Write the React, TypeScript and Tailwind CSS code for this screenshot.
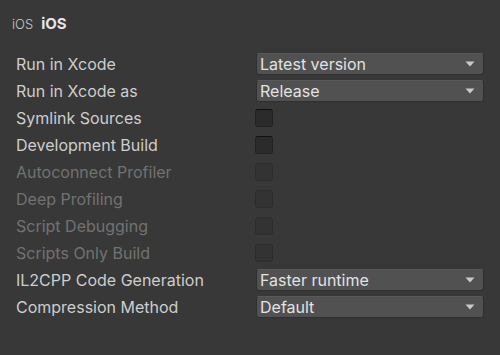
import React from "react";

type Row =
    | { label: string; kind: "select"; value: string }
    | { label: string; kind: "check"; disabled?: boolean };

const rows: Row[] = [
    { label: "Run in Xcode", kind: "select", value: "Latest version" },
    { label: "Run in Xcode as", kind: "select", value: "Release" },
    { label: "Symlink Sources", kind: "check" },
    { label: "Development Build", kind: "check" },
    { label: "Autoconnect Profiler", kind: "check", disabled: true },
    { label: "Deep Profiling", kind: "check", disabled: true },
    { label: "Script Debugging", kind: "check", disabled: true },
    { label: "Scripts Only Build", kind: "check", disabled: true },
    { label: "IL2CPP Code Generation", kind: "select", value: "Faster runtime" },
    { label: "Compression Method", kind: "select", value: "Default" },
];

function Select({ value }: { value: string }) {
    return <div className="flex h-[22px] items-center justify-between rounded-[3px] border border-[#303030] border-t-[#585858] bg-[#515151] pl-[3px] pr-[8px] text-[16px] leading-[20px] text-[#e2e2e2]">
        <span>{value}</span>
        <svg width="10" height="6" viewBox="0 0 10 6">
            <path d="M0.5 0.5 H9.5 L5 5.5 Z" fill="#c9c9c9" />
        </svg>
    </div>
}

function Check({ disabled }: { disabled?: boolean }) {
    return <div className={disabled
        ? "ml-[-1px] size-[18px] rounded-[3px] border border-[#2c2c2c] bg-[#333333]"
        : "ml-[-1px] size-[18px] rounded-[3px] border border-[#222222] border-t-[#111111] bg-[#2b2b2b]"} />
}

export default function App() {
    return <div className="h-[355px] w-[500px] bg-[#383838] px-4 font-['Inter',sans-serif]">
        <div className="flex h-[50px] items-start gap-[8px] pt-[14px]">
            <span className="ml-[-4px] text-[13px] font-light leading-[20px] text-[#c8c8c8]">iOS</span>
            <span className="text-[15px] font-bold leading-[20px] text-[#e6e6e6]">iOS</span>
        </div>
        <div className="flex flex-col">
            {rows.map((r) => (
                <div key={r.label} className="grid h-[27px] grid-cols-[240px_1fr] items-center">
                    <span className={r.kind === "check" && r.disabled
                        ? "pt-[1px] text-[16px] leading-[20px] text-[#727272]"
                        : "pt-[1px] text-[16px] leading-[20px] text-[#cdcdcd]"}>{r.label}</span>
                    {r.kind === "select" ? <Select value={r.value} /> : <Check disabled={r.disabled} />}
                </div>
            ))}
        </div>
    </div>
}
